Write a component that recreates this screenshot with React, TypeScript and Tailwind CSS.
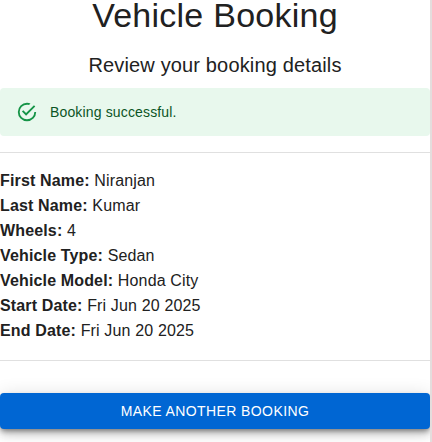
const details = [
  ['First Name:', 'Niranjan'],
  ['Last Name:', 'Kumar'],
  ['Wheels:', '4'],
  ['Vehicle Type:', 'Sedan'],
  ['Vehicle Model:', 'Honda City'],
  ['Start Date:', 'Fri Jun 20 2025'],
  ['End Date:', 'Fri Jun 20 2025'],
];

export default function App() {
  return (
    <div className="h-[442px] w-[432px] overflow-hidden border-r-2 border-[#e4dddd] bg-white font-['Liberation_Sans',Arial,sans-serif] text-[#212121]">
      <h1 className="h-9 text-center text-[34px] leading-[30px] tracking-[0.25px]">Vehicle Booking</h1>
      <h2 className="mt-[13px] text-center text-[20px] leading-8 tracking-[0.15px]">Review your booking details</h2>
      <div className="mt-[7px] flex h-12 items-center rounded bg-[#e8f8ed] px-4 text-[#0b5525]">
        <svg viewBox="0 0 24 24" className="mr-3 size-[22px] fill-[#159447]">
          <path d="M20,12A8,8 0 0,1 12,20A8,8 0 0,1 4,12A8,8 0 0,1 12,4C12.76,4 13.5,4.11 14.2, 4.31L15.77,2.74C14.61,2.26 13.34,2 12,2A10,10 0 0,0 2,12A10,10 0 0,0 12,22A10,10 0 0, 0 22,12H20M7.91,10.08L6.5,11.5L11,16L21,6L19.59,4.58L11,13.17L7.91,10.08Z" />
        </svg>
        <span className="text-[14px] leading-5 tracking-[0.15px]">Booking successful.</span>
      </div>
      <hr className="mt-4 border-[#e0e0e0]" />
      <div className="mt-[15px] text-[16px] leading-[25px] tracking-[0.15px]">
        {details.map(([label, value]) => (
          <p key={label}>
            <strong>{label}</strong> {value}
          </p>
        ))}
      </div>
      <hr className="mt-[17px] border-[#e0e0e0]" />
      <button className="mt-8 block h-9 w-full rounded bg-[#0066d3] text-[14px] tracking-[0.4px] text-white shadow-[0px_3px_5px_-1px_rgba(0,0,0,0.4),0px_6px_10px_0px_rgba(0,0,0,0.16),0px_1px_18px_0px_rgba(0,0,0,0.12)]">
        MAKE ANOTHER BOOKING
      </button>
    </div>
  );
}
